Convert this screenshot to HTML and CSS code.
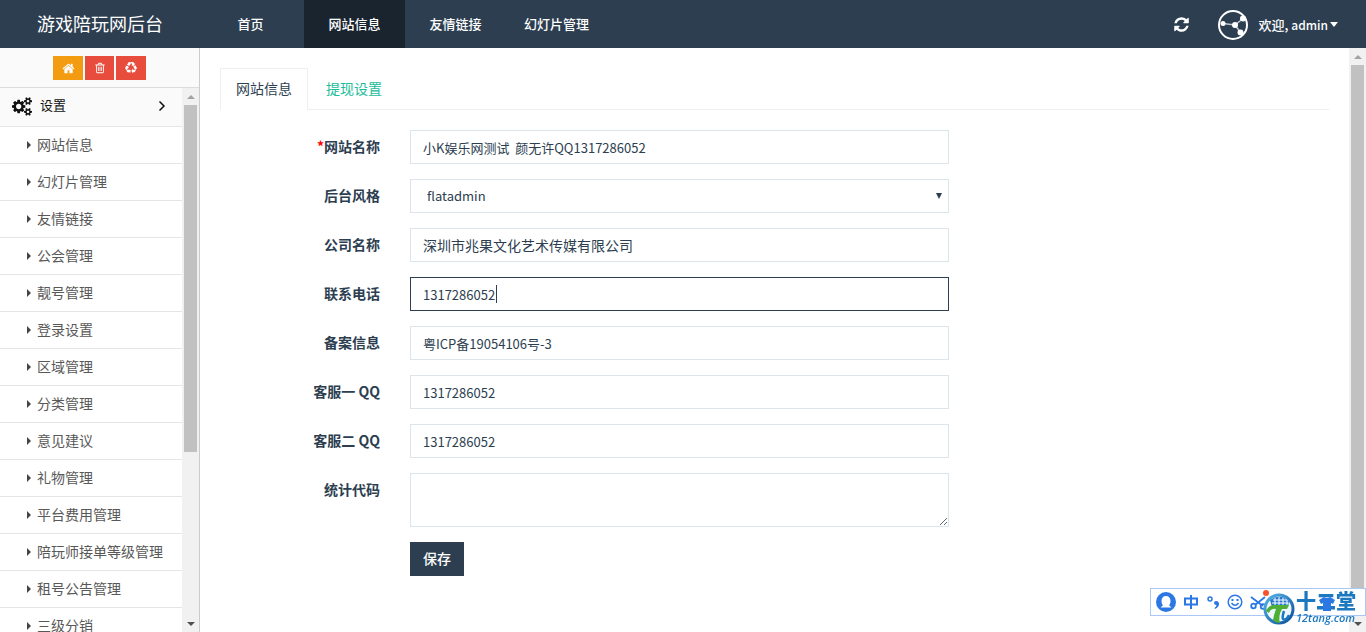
FILE: index.html
```html
<!DOCTYPE html>
<html lang="zh-CN">
<head>
<meta charset="utf-8">
<title>游戏陪玩网后台</title>
<link rel="stylesheet" href="styles.css">
</head>
<body>
<svg class="sprite" aria-hidden="true">
  <symbol id="i-home" viewBox="0 0 1792 1792"><path d="M1472 992v480q0 26-19 45t-45 19h-384v-384h-256v384h-384q-26 0-45-19t-19-45v-480q0-1 .5-3t.5-3l575-474 575 474q1 2 1 6zm223-69l-62 74q-8 9-21 11h-3q-13 0-21-7l-692-577-692 577q-12 8-24 7-13-2-21-11l-62-74q-8-10-7-23.5t11-21.5l719-599q32-26 76-26t76 26l244 204v-195q0-14 9-23t23-9h192q14 0 23 9t9 23v408l219 182q10 8 11 21.5t-7 23.5z"/></symbol>
  <symbol id="i-trash" viewBox="0 0 1792 1792"><path d="M704 736v576q0 14-9 23t-23 9h-64q-14 0-23-9t-9-23v-576q0-14 9-23t23-9h64q14 0 23 9t9 23zm256 0v576q0 14-9 23t-23 9h-64q-14 0-23-9t-9-23v-576q0-14 9-23t23-9h64q14 0 23 9t9 23zm256 0v576q0 14-9 23t-23 9h-64q-14 0-23-9t-9-23v-576q0-14 9-23t23-9h64q14 0 23 9t9 23zm128 724v-948h-896v948q0 22 7 40.5t14.5 27 10.5 8.5h832q3 0 10.5-8.5t14.5-27 7-40.5zm-672-1076h448l-48-117q-7-9-17-11h-317q-10 2-17 11zm928 32v64q0 14-9 23t-23 9h-96v948q0 83-47 143.5t-113 60.5h-832q-66 0-113-58.5t-47-141.5v-952h-96q-14 0-23-9t-9-23v-64q0-14 9-23t23-9h309l70-167q15-37 54-63t79-26h320q40 0 79 26t54 63l70 167h309q14 0 23 9t9 23z"/></symbol>
  <symbol id="i-recycle" viewBox="0 0 1792 1792"><path d="M836 1169l-15 368-2 22-420-29q-36-3-67-31.5t-47-65.5q-11-27-14.5-55t4-65 12-55 21.5-64 19-53q78 12 509 28zm-387-586l180 379-147-92q-63 72-111.5 144.5t-72.5 125-39.5 94.5-18.5 63l-4 21-190-357q-17-26-18-56t6-47l8-18q35-63 114-188l-140-86zm1231 517l-188 359q-12 29-36.5 46.5t-43.5 20.5l-18 4q-71 7-219 12l8 164-230-367 211-362 7 173q170 16 283 5t170-33zm-785-924q-47 63-265 435l-317-187-19-12 225-356q20-31 60-45t80-10q24 2 48.5 12t42 21 41.5 33 36 34.5 36 39.5 32 35zm655 307l212 363q18 37 12.5 76t-27.5 74q-13 20-33 37t-38 28-48.5 22-47 16-51.5 14-46 12q-34-72-265-436l313-195zm-143-226l142-83-220 373-419-20 151-86q-34-89-75-166t-75.5-123.5-64.5-80-47-46.5l-17-13 405 1q31-3 58 10.5t39 28.5l11 15q39 61 112 190z"/></symbol>
  <symbol id="i-refresh" viewBox="0 0 1792 1792"><path d="M1639 1056q0 5-1 7-64 268-268 434.5t-478 166.5q-146 0-282.5-55t-243.5-157l-129 129q-19 19-45 19t-45-19-19-45v-448q0-26 19-45t45-19h448q26 0 45 19t19 45-19 45l-137 137q71 66 161 102t187 36q134 0 250-65t186-179q11-17 53-117 8-23 30-23h192q13 0 22.5 9.5t9.5 22.5zm25-800v448q0 26-19 45t-45 19h-448q-26 0-45-19t-19-45 19-45l138-138q-148-137-349-137-134 0-250 65t-186 179q-11 17-53 117-8 23-30 23h-199q-13 0-22.5-9.5t-9.5-22.5v-7q65-268 270-434.5t480-166.5q146 0 284 55.5t245 156.5l130-129q19-19 45-19t45 19 19 45z"/></symbol>
  <symbol id="i-cogs" viewBox="0 0 1920 1792"><path d="M896 896q0-106-75-181t-181-75-181 75-75 181 75 181 181 75 181-75 75-181zm768 512q0-52-38-90t-90-38-90 38-38 90q0 53 37.5 90.5t90.5 37.5 90.5-37.5 37.5-90.5zm0-1024q0-52-38-90t-90-38-90 38-38 90q0 53 37.5 90.5t90.5 37.5 90.5-37.5 37.5-90.5zm-384 421v185q0 10-7 19.5t-16 10.5l-155 24q-11 35-32 76 34 48 90 115 7 11 7 20 0 12-7 19-23 30-82.5 89.5t-78.5 59.5q-11 0-21-7l-115-90q-37 19-77 31-11 108-23 155-7 24-30 24h-186q-11 0-20-7.5t-10-17.5l-23-153q-34-10-75-31l-118 89q-7 7-20 7-11 0-21-8-144-133-144-160 0-9 7-19 10-14 41-53t47-61q-23-44-35-82l-152-24q-10-1-17-9.5t-7-19.5v-185q0-10 7-19.5t16-10.5l155-24q11-35 32-76-34-48-90-115-7-11-7-20 0-12 7-20 22-30 82-89t79-59q11 0 21 7l115 90q34-18 77-32 11-108 23-154 7-24 30-24h186q11 0 20 7.5t10 17.5l23 153q34 10 75 31l118-89q8-7 20-7 11 0 21 8 144 133 144 160 0 8-7 19-12 16-42 54t-45 60q23 48 34 82l152 23q10 2 17 10.5t7 19.5zm640 533v140q0 16-149 31-12 27-30 52 51 113 51 138 0 4-4 7-122 71-124 71-8 0-46-47t-52-68q-20 2-30 2t-30-2q-14 21-52 68t-46 47q-2 0-124-71-4-3-4-7 0-25 51-138-18-25-30-52-149-15-149-31v-140q0-16 149-31 13-29 30-52-51-113-51-138 0-4 4-7 4-2 35-20t59-34 30-16q8 0 46 46.5t52 67.5q20-2 30-2t30 2q51-71 92-112l6-2q4 0 124 70 4 3 4 7 0 25-51 138 17 23 30 52 149 15 149 31zm0-1024v140q0 16-149 31-12 27-30 52 51 113 51 138 0 4-4 7-122 71-124 71-8 0-46-47t-52-68q-20 2-30 2t-30-2q-14 21-52 68t-46 47q-2 0-124-71-4-3-4-7 0-25 51-138-18-25-30-52-149-15-149-31v-140q0-16 149-31 13-29 30-52-51-113-51-138 0-4 4-7 4-2 35-20t59-34 30-16q8 0 46 46.5t52 67.5q20-2 30-2t30 2q51-71 92-112l6-2q4 0 124 70 4 3 4 7 0 25-51 138 17 23 30 52 149 15 149 31z"/></symbol>
</svg>

<header class="topbar">
  <a class="brand" href="#">游戏陪玩网后台</a>
  <nav class="topnav">
    <a class="home" href="#">首页</a>
    <a class="active" href="#">网站信息</a>
    <a href="#">友情链接</a>
    <a href="#">幻灯片管理</a>
  </nav>
  <div class="tools">
    <button class="refresh" type="button" aria-label="刷新"><svg width="17" height="17"><use href="#i-refresh"/></svg></button>
    <button class="user" type="button">
      <svg class="avatar" width="30" height="30" viewBox="0 0 30 30">
        <circle cx="15" cy="15" r="14" fill="#2c3e50" stroke="#fff" stroke-width="2"/>
        <path d="M5 13.500L17 15L25 8.500M17 15L22.500 22.500" fill="none" stroke="#c3c9cf" stroke-width="1.500"/>
        <g fill="#fff"><circle cx="5" cy="13.500" r="2.500"/><circle cx="17" cy="15" r="3"/><circle cx="25" cy="8.500" r="3"/><circle cx="22.500" cy="22.500" r="3"/></g>
      </svg>
      <span class="welcome">欢迎, <span class="name">admin</span></span>
      <span class="caret"></span>
    </button>
  </div>
</header>

<div class="page">
  <aside class="sidebar">
    <div class="shortcuts">
      <button class="shortcut orange" type="button" aria-label="首页"><svg width="13" height="13"><use href="#i-home"/></svg></button>
      <button class="shortcut red narrow" type="button" aria-label="清空"><svg width="12" height="12"><use href="#i-trash"/></svg></button>
      <button class="shortcut red" type="button" aria-label="回收"><svg width="12" height="12"><use href="#i-recycle"/></svg></button>
    </div>
    <div class="menu-area">
      <nav class="menu">
        <a class="group" href="#">
          <svg width="20" height="19"><use href="#i-cogs"/></svg>
          <span class="group-name">设置</span>
          <svg class="angle" width="8" height="12" viewBox="0 0 8 12"><path d="M1.500 1.500L6 6L1.500 10.500" fill="none" stroke="#111" stroke-width="1.500"/></svg>
        </a>
        <a class="item" href="#">网站信息</a>
        <a class="item" href="#">幻灯片管理</a>
        <a class="item" href="#">友情链接</a>
        <a class="item" href="#">公会管理</a>
        <a class="item" href="#">靓号管理</a>
        <a class="item" href="#">登录设置</a>
        <a class="item" href="#">区域管理</a>
        <a class="item" href="#">分类管理</a>
        <a class="item" href="#">意见建议</a>
        <a class="item" href="#">礼物管理</a>
        <a class="item" href="#">平台费用管理</a>
        <a class="item" href="#">陪玩师接单等级管理</a>
        <a class="item" href="#">租号公告管理</a>
        <a class="item" href="#">三级分销</a>
      </nav>
      <div class="scrollbar"><span class="up"></span><span class="track"><span class="thumb menu-thumb"></span></span><span class="down"></span></div>
    </div>
  </aside>

  <main class="content">
    <nav class="tabs">
      <a class="tab current" href="#">网站信息</a>
      <a class="tab" href="#">提现设置</a>
    </nav>
    <form class="form">
      <label for="site"><span class="star">*</span>网站名称</label>
      <input id="site" type="text" value="小K娱乐网测试&nbsp; 颜无许QQ1317286052">
      <label for="style">后台风格</label>
      <div class="select"><select id="style"><option>flatadmin</option></select></div>
      <label for="company">公司名称</label>
      <input id="company" class="han" type="text" value="深圳市兆果文化艺术传媒有限公司">
      <label for="phone">联系电话</label>
      <div class="editing"><input id="phone" class="focused" type="text" value="1317286052"></div>
      <label for="icp">备案信息</label>
      <input id="icp" type="text" value="粤ICP备19054106号-3">
      <label for="qq1">客服一 QQ</label>
      <input id="qq1" type="text" value="1317286052">
      <label for="qq2">客服二 QQ</label>
      <input id="qq2" type="text" value="1317286052">
      <label for="code">统计代码</label>
      <textarea id="code"></textarea>
      <button class="save" type="button">保存</button>
    </form>
  </main>
  <div class="scrollbar"><span class="up"></span><span class="track"><span class="thumb page-thumb"></span></span><span class="down"></span></div>
</div>

<div class="ime">
  <svg width="20" height="20" viewBox="0 0 20 20"><circle cx="10" cy="10" r="10" fill="#2b78e4"/><path d="M10 4C7 4 5.500 6 5.500 9C5.500 11 6 12.200 7 13.200L4.500 15.500H15.500L13 13.200C14 12.200 14.500 11 14.500 9C14.500 6 13 4 10 4Z" fill="#fff"/></svg>
  <svg width="16" height="16" viewBox="0 0 16 16"><path d="M2 4.500H14V10.500H2ZM8 1V15" fill="none" stroke="#2b78e4" stroke-width="2"/></svg>
  <svg width="14" height="16" viewBox="0 0 14 16"><circle cx="4" cy="5" r="2" fill="none" stroke="#2b78e4" stroke-width="1.500"/><path d="M8 9Q8 7 10 7Q13 7 13 10Q13 13 9 15L8.500 14Q10.500 12.500 10.500 11Q8 11 8 9Z" fill="#2b78e4"/></svg>
  <svg width="16" height="16" viewBox="0 0 16 16"><g fill="none" stroke="#2b78e4" stroke-width="1.500"><circle cx="8" cy="8" r="6.800"/><path d="M4.500 9Q8 13.500 11.500 9"/><path d="M5.500 5V7M10.500 5V7" stroke-width="2"/></g></svg>
  <svg width="16" height="16" viewBox="0 0 16 16"><g fill="none" stroke="#2b78e4" stroke-width="1.800"><path d="M1 3L13 12M15 3L5 11"/><circle cx="3.500" cy="12" r="2.300"/><circle cx="13" cy="12.500" r="2.300"/></g></svg>
</div>
<div class="mark">
  <svg width="34" height="38" viewBox="0 0 34 38">
    <defs><linearGradient id="ring" x1="0" y1="0" x2="1" y2="1"><stop offset="0" stop-color="#56b4e6"/><stop offset="1" stop-color="#0b4f9e"/></linearGradient></defs>
    <circle cx="17" cy="20" r="14" fill="#eef7fd" stroke="url(#ring)" stroke-width="3"/>
    <path d="M8 11Q18 4 27 12L26 18H10Z" fill="#2379cf"/>
    <path d="M11 11H25M10 14H26M13 9V17M17 8V17M21 9V17M25 11V17" stroke="#fff" stroke-width="1"/>
    <path d="M4 22Q7 15 14 16H27L25 20H20Q16 27 18 34Q13 34 11 31Q12 25 14 20Q9 19 7 24Z" fill="#4eae35"/>
    <path d="M22 22Q20 28 21 30Q24 32 27 26" fill="none" stroke="#1b79be" stroke-width="2.500"/>
    <circle cx="4" cy="4" r="3" fill="#f7522d"/>
  </svg>
  <div class="mark-words"><span class="mark-name">十二堂</span><span class="mark-site">12tang.com</span></div>
  <svg class="shirt" width="16" height="14" viewBox="0 0 16 14"><path d="M5 0Q8 2 11 0L16 3L14 7L12 6V14H4V6L2 7L0 3Z" fill="#2b78e4"/></svg>
</div>
</body>
</html>
```
FILE: styles.css
```css
* { box-sizing: border-box; }
html, body { height: 100%; }
body {
  margin: 0;
  display: flex;
  flex-direction: column;
  overflow: hidden;
  background: #fff;
  color: #2c3e50;
  font: 14px/20px "Noto Sans CJK SC", sans-serif;
}
a { color: inherit; text-decoration: none; }
button, input, select, textarea { font: inherit; color: inherit; border: 0; border-radius: 0; margin: 0; outline: 0; }
button { padding: 0; background: none; }
svg { display: block; fill: currentColor; flex: none; }
.sprite { position: absolute; width: 0; height: 0; }

/* top bar */
.topbar { display: flex; flex: none; height: 48px; background: #2c3e50; color: #fff; }
.brand { width: 200px; font-size: 18px; line-height: 46px; text-align: center; }
.topnav { display: flex; flex: 1; font-size: 13px; font-weight: 500; line-height: 47px; }
.topnav a { width: 101px; text-align: center; }
.topnav .home { margin-right: 3px; }
.topnav .active { background: #1a242f; }
.tools { display: flex; align-items: center; gap: 28px; padding: 1px 28px 0 0; }
.user { display: flex; align-items: center; font-size: 13px; font-weight: 500; }
.avatar { margin-right: 10px; }
.name { font-size: 12px; }
.caret { margin-left: 2px; border: 4px solid transparent; border-top: 5px solid #fff; border-bottom: 0; }

/* frame */
.page { display: flex; flex: 1; min-height: 0; }
.sidebar { display: flex; flex-direction: column; flex: none; width: 200px; border-right: 1px solid #ccc; }
.shortcuts { display: flex; flex: none; justify-content: center; gap: 2px; padding: 8px 0 7px; background: #fafafa; border-bottom: 1px solid #ddd; }
.shortcut { display: flex; align-items: center; justify-content: center; width: 30px; height: 24px; color: #fff; }
.narrow { width: 29px; }
.orange { background: #f39c12; }
.red { background: #e74c3c; }
.menu-area { display: flex; flex: 1; min-height: 0; }
.menu { flex: 1; overflow: hidden; }
.group { display: flex; align-items: center; height: 39px; padding: 0 16px 2px 12px; background: #fafafa; border-bottom: 1px solid #e5e5e5; color: #111; }
.group-name { flex: 1; margin-left: 8px; font-size: 13px; line-height: 33px; align-self: flex-start; }
.item { display: flex; align-items: center; height: 37px; padding: 0 0 2px 27px; border-bottom: 1px solid #e5e5e5; color: #585858; }
.item::before { content: ""; margin: 2px 6px 0 0; border: 4px solid transparent; border-left-color: #444; border-right: 0; }

/* scroll bars */
.scrollbar { display: flex; flex-direction: column; flex: none; width: 17px; background: #f1f1f1; }
.up, .down { display: flex; align-items: center; justify-content: center; height: 17px; }
.up::before { content: ""; border: 4px solid transparent; border-bottom-color: #a3a3a3; border-top: 0; }
.down::before { content: ""; border: 4px solid transparent; border-top-color: #505050; border-bottom: 0; }
.track { flex: 1; padding: 0 2px; }
.thumb { display: block; background: #c1c1c1; }
.menu-thumb { height: 68%; }
.page-thumb { height: 97%; }

/* content */
.content { flex: 1; min-width: 0; padding: 20px 20px 0; }
.tabs { display: flex; border-bottom: 1px solid #ecf0f1; }
.tab { padding: 9px 15px 11px; border: 1px solid transparent; border-bottom: 0; color: #1abc9c; }
.current { margin-bottom: -1px; background: #fff; border-color: #ecf0f1; color: #2c3e50; }
.tab + .tab { margin-left: 2px; }
.form { display: grid; grid-template-columns: 160px minmax(0, 539px); gap: 15px 30px; padding-top: 20px; align-items: start; }
.form label { padding-top: 6px; font-weight: 700; text-align: right; }
.star { color: #f00; }
.form input, .form select, .form textarea {
  display: block;
  width: 100%;
  height: 34px;
  padding: 6px 12px;
  background: #fff;
  border: 1px solid #dce4ec;
  font-size: 13px;
}
.form .han { font-size: 14px; }
.form .focused { border-color: #2c3e50; }
.select, .editing { position: relative; }
.form select { appearance: none; padding-left: 16px; }
.select::after { content: ""; position: absolute; right: 7px; top: 14px; border: 3px solid transparent; border-top: 6px solid #2c3e50; border-bottom: 0; }
.editing::after { content: ""; position: absolute; left: 86px; top: 8px; width: 1px; height: 18px; background: #2c3e50; }
.form textarea { height: 54px; resize: vertical; }
.save { grid-column: 2; justify-self: start; height: 34px; padding: 0 13px 2px; background: #2c3e50; color: #fff; font-weight: 500; }

/* input method bar and site badge, floating over the page */
.ime { position: fixed; right: 0; bottom: 16px; display: flex; align-items: center; gap: 7px; width: 216px; height: 28px; padding-left: 5px; background: #fff; border: 1px solid #a9c8f5; }
.mark { position: fixed; right: 10px; bottom: 5px; display: flex; align-items: center; color: #1c78bf; }
.mark-words { display: flex; flex-direction: column; }
.mark-name { font-size: 20px; font-weight: 900; line-height: 20px; }
.mark-site { font: italic 600 11px/14px "Open Sans", sans-serif; }
.shirt { position: absolute; left: 57px; top: 8px; }
```
